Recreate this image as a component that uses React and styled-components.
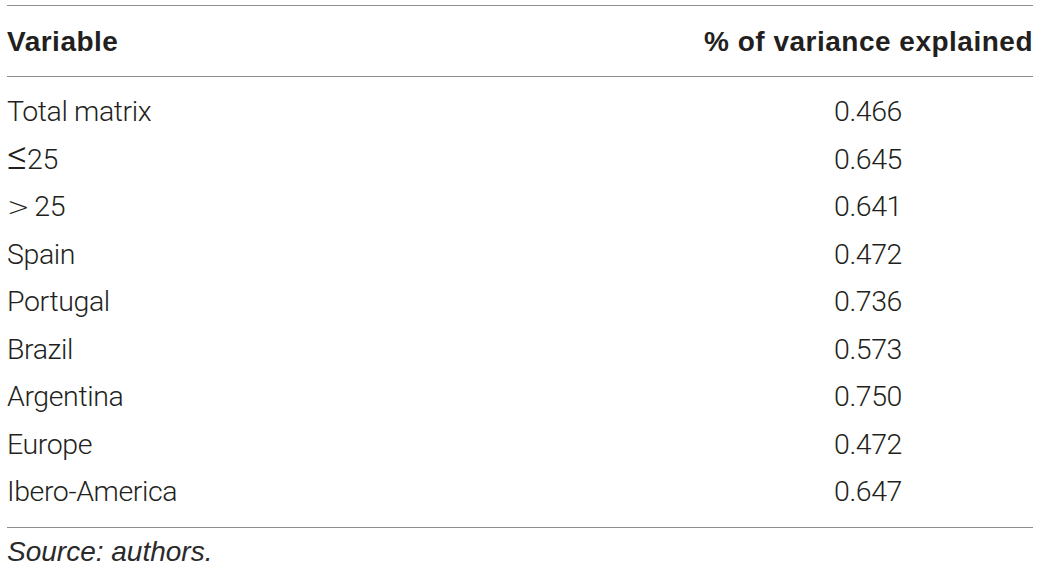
import React from 'react';
import styled, { createGlobalStyle } from 'styled-components';

const GlobalStyle = createGlobalStyle`
  html, body {
    margin: 0;
    padding: 0;
    background: #ffffff;
  }
  body {
    font-family: "Liberation Sans", Arial, sans-serif;
    color: #231f20;
  }
`;

const rows = [
  { label: 'Total matrix', value: '0.466' },
  { sym: '\u2264', label: '25', value: '0.645', big: true },
  { sym: '>', label: '25', value: '0.641', gap: true },
  { label: 'Spain', value: '0.472' },
  { label: 'Portugal', value: '0.736' },
  { label: 'Brazil', value: '0.573' },
  { label: 'Argentina', value: '0.750' },
  { label: 'Europe', value: '0.472' },
  { label: 'Ibero-America', value: '0.647' },
];

const Page = styled.div`
  padding: 5px 7px 0;
`;

const Table = styled.div`
  border-top: 1px solid #8e8e8e;
`;

const Head = styled.div`
  display: grid;
  grid-template-columns: 1fr 330px;
  padding: 20px 0 18px;
  line-height: 32px;
  font-size: 28px;
  font-weight: 700;
  letter-spacing: 0.5px;
  color: #231f20;
  border-bottom: 1px solid #8e8e8e;
`;

const HeadCell = styled.div`
  text-align: ${(p) => (p.$right ? 'right' : 'left')};
  white-space: nowrap;
`;

const Body = styled.div`
  padding: 11px 0;
  border-bottom: 1px solid #8e8e8e;
`;

const Row = styled.div`
  display: grid;
  grid-template-columns: 1fr 330px;
  height: 47.5px;
  line-height: 47.5px;
  font-family: Roboto, "Liberation Sans", sans-serif;
  font-weight: 300;
  font-size: 28.5px;
  letter-spacing: -0.4px;
  color: #231f20;
`;

const Label = styled.div`
  white-space: nowrap;
`;

const Sym = styled.span`
  font-family: ${(p) => (p.$big ? 'Roboto, sans-serif' : '"DejaVu Sans", sans-serif')};
  font-weight: ${(p) => (p.$big ? 300 : 200)};
  font-size: ${(p) => (p.$big ? '40px' : '27px')};
  line-height: 0;
  margin-right: ${(p) => (p.$gap ? '5px' : '0')};
`;

const Value = styled.div`
  text-align: center;
`;

const Note = styled.div`
  line-height: 47.5px;
  font-size: 28px;
  font-style: italic;
  color: #2a2a2a;
`;

export default function App() {
  return (
    <Page>
      <GlobalStyle />
      <Table>
        <Head>
          <HeadCell>Variable</HeadCell>
          <HeadCell $right>% of variance explained</HeadCell>
        </Head>
        <Body>
          {rows.map((r, i) => (
            <Row key={i}>
              <Label>
                {r.sym && (
                  <Sym $gap={r.gap} $big={r.big}>
                    {r.sym}
                  </Sym>
                )}
                {r.label}
              </Label>
              <Value>{r.value}</Value>
            </Row>
          ))}
        </Body>
      </Table>
      <Note>Source: authors.</Note>
    </Page>
  );
}
